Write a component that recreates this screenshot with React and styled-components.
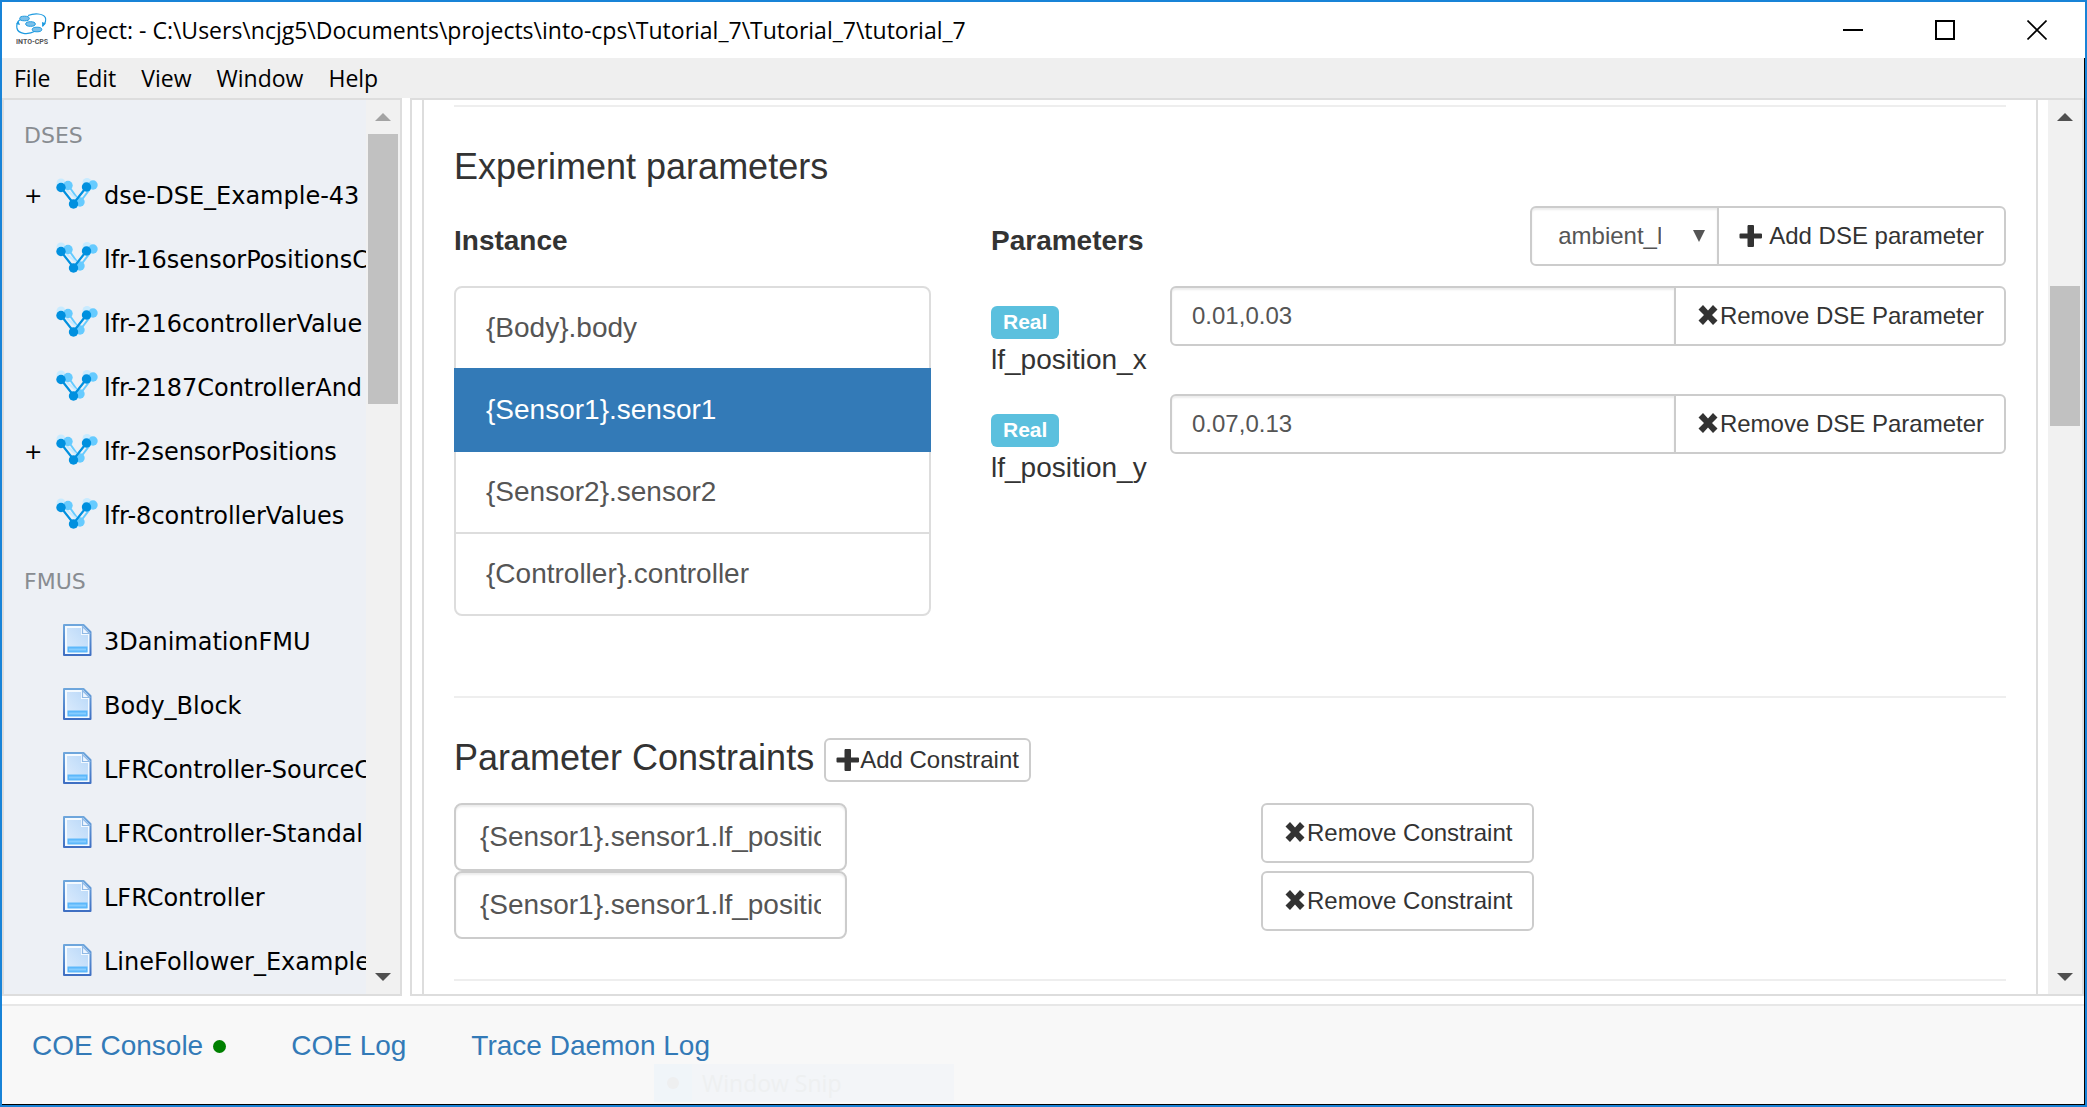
import React from "react";
import styled, { createGlobalStyle, css } from "styled-components";

const sans = `"Liberation Sans", Arial, sans-serif`;
const ui = `"Open Sans", "Segoe UI", sans-serif`;
const tree = `"DejaVu Sans", Verdana, sans-serif`;

const Global = createGlobalStyle`
  *, *::before, *::after { box-sizing: border-box; }
  html, body, #root { height: 100%; margin: 0; }
  body { overflow: hidden; background: #fff; color: #333; font-family: ${sans}; font-size: 28px; line-height: 40px; }
  button, input, select { font: inherit; color: inherit; margin: 0; }
  h1, h2, h3, h4, ul { margin: 0; padding: 0; }
`;

const Window = styled.div`
  height: 100vh;
  display: flex;
  flex-direction: column;
  border: 2px solid #1883d7;
`;

const TitleBar = styled.header`
  flex: none;
  height: 56px;
  display: flex;
  align-items: center;
  padding: 0 2px 0 14px;
  gap: 2px;
  font-family: ${ui};
  color: #000;
`;

const Title = styled.h1`
  flex: 1;
  font-size: 23px;
  font-weight: 400;
  line-height: 32px;
  white-space: pre;
`;

const WindowButtons = styled.div`
  display: flex;
`;

const WindowButton = styled.button`
  width: 92px;
  height: 56px;
  padding: 0;
  border: 0;
  background: none;
  display: grid;
  place-items: center;
`;

const Client = styled.div`
  flex: 1;
  min-height: 0;
  display: flex;
  flex-direction: column;
  border: solid #000;
  border-width: 0 1px 1px 0;
`;

const MenuBar = styled.nav`
  flex: none;
  height: 40px;
  display: flex;
  align-items: center;
  background: #efefef;
  font-family: ${ui};
  padding-left: 12px;
  gap: 25px;
`;

const MenuItem = styled.button`
  padding: 0;
  border: 0;
  background: none;
  color: #000;
  font-size: 23px;
  line-height: 32px;
`;

const Body = styled.div`
  flex: 1;
  min-height: 0;
  display: flex;
  gap: 8px;
`;

const Sidebar = styled.aside`
  flex: none;
  width: 400px;
  display: flex;
  border: 2px solid #ddd;
  background: #edf0f5;
  font-family: ${tree};
`;

const Tree = styled.div`
  flex: 1;
  min-width: 0;
  padding-top: 2px;
  overflow: hidden;
`;

const TreeHeading = styled.h2`
  height: 62px;
  padding: 6px 0 0 20px;
  display: flex;
  align-items: center;
  color: #888c91;
  font-size: 22px;
  font-weight: 400;
`;

const TreeList = styled.ul`
  list-style: none;
`;

const TreeRow = styled.li`
  height: 64px;
  display: grid;
  grid-template-columns: 32px 42px 1fr;
  align-items: center;
  padding-left: 20px;
  color: #000;
  font-size: 24px;
  white-space: nowrap;
`;

const Expander = styled.button`
  grid-column: 1;
  justify-self: start;
  padding: 0;
  border: 0;
  background: none;
  font-size: 22px;
  line-height: 32px;
`;

const IconCell = styled.span`
  grid-column: 2;
  display: grid;
  justify-items: center;
  padding-bottom: 4px;
`;

const TreeLabel = styled.span`
  grid-column: 3;
  padding-left: 6px;
`;

const Track = styled.div`
  flex: none;
  width: 34px;
  display: flex;
  flex-direction: column;
  align-items: center;
  background: #f1f1f1;
`;

const ArrowButton = styled.button`
  flex: none;
  width: 100%;
  height: 34px;
  padding: 0;
  border: 0;
  background: none;
  color: ${(p) => (p.$dim ? "#a3a3a3" : "#505050")};
  display: grid;
  place-items: center;
`;

const TrackLane = styled.div`
  flex: 1;
  width: 30px;
  display: flex;
  flex-direction: column;
`;

const Thumb = styled.div`
  height: ${(p) => p.$size}%;
  margin-top: ${(p) => p.$before}px;
  background: #c1c1c1;
`;

const Main = styled.main`
  flex: 1;
  min-width: 0;
  display: flex;
  justify-content: space-between;
  gap: 10px;
  padding-left: 10px;
  border: 2px solid #ddd;
`;

const Panel = styled.div`
  flex: 1;
  min-width: 0;
  overflow: hidden;
  border: solid #ddd;
  border-width: 0 2px;
  padding: 5px 30px 0;
`;

const Section = styled.section`
  border-top: 2px solid #eee;
  padding-top: 40px;
  padding-bottom: ${(p) => p.$bottom || 0}px;
`;

const SectionTitle = styled.h2`
  font-size: 36px;
  font-weight: 400;
  line-height: 39px;
`;

const TitleRow = styled.div`
  display: flex;
  align-items: flex-start;
  gap: 10px;
  height: 65px;
`;

const Columns = styled.div`
  display: grid;
  grid-template-columns: 477px 1fr;
  gap: 60px;
  margin-top: 20px;
`;

const ColumnHead = styled.div`
  height: 60px;
  margin-bottom: 20px;
  display: flex;
  align-items: flex-start;
  justify-content: space-between;
`;

const ColumnTitle = styled.h3`
  padding-top: 15px;
  font-size: 28px;
  font-weight: 700;
`;

const InstanceList = styled.ul`
  list-style: none;
`;

const InstanceItem = styled.li`
  &:not(:first-child) { margin-top: -2px; }
  &:first-child > button { border-radius: 8px 8px 0 0; }
  &:last-child > button { border-radius: 0 0 8px 8px; }
`;

const InstanceButton = styled.button`
  position: relative;
  display: block;
  width: 100%;
  padding: 20px 30px;
  border: 2px solid #ddd;
  background: #fff;
  color: #555;
  text-align: left;
  ${(p) =>
    p.$active &&
    css`
      z-index: 1;
      background: #337ab7;
      border-color: #337ab7;
      color: #fff;
    `}
`;

const Button = styled.button`
  flex: none;
  display: flex;
  align-items: center;
  height: ${(p) => (p.$small ? 44 : 60)}px;
  padding: 0 ${(p) => (p.$small ? 10 : 20)}px;
  gap: ${(p) => p.$gap || 0}px;
  border: 2px solid #ccc;
  border-radius: 6px;
  background: #fff;
  font-size: 24px;
  line-height: 36px;
  white-space: nowrap;
`;

const field = css`
  border: 2px solid #ccc;
  background: #fff;
  color: #555;
  box-shadow: inset 0 2px 2px rgba(0, 0, 0, 0.075);
`;

const Group = styled.div`
  display: flex;
  & > :first-child { border-radius: 6px 0 0 6px; }
  & > :last-child { border-radius: 0 6px 6px 0; }
`;

const SelectBox = styled.div`
  ${field}
  display: flex;
  align-items: center;
  width: 189px;
  margin-right: -2px;
  padding-right: 12px;
  font-size: 24px;
`;

const Select = styled.select`
  flex: 1;
  min-width: 0;
  height: 56px;
  padding: 0 32px 0 26px;
  border: 0;
  appearance: none;
  background: none;
  color: #555;
`;

const ParamRow = styled.div`
  display: grid;
  grid-template-columns: 179px 1fr;
  height: 108px;
`;

const ParamLabel = styled.label`
  display: flex;
  flex-direction: column;
  align-items: flex-start;
  gap: 1px;
  padding-top: 20px;
`;

const Badge = styled.span`
  height: 33px;
  padding: 0 12px;
  border-radius: 6px;
  background: #5bc0de;
  color: #fff;
  font-size: 21px;
  font-weight: 700;
  line-height: 32px;
`;

const ParamInput = styled.input`
  ${field}
  flex: 1;
  min-width: 0;
  height: 60px;
  margin-right: -2px;
  padding: 0 20px;
  font-size: 24px;
`;

const ConstraintRow = styled.div`
  display: grid;
  grid-template-columns: 52% auto;
  justify-content: start;
  align-items: start;
`;

const ConstraintInput = styled.input`
  ${field}
  width: 393px;
  height: 68px;
  padding: 0 24px;
  border-radius: 8px;
`;

const Gap = styled.div`
  flex: none;
  height: 8px;
`;

const Footer = styled.footer`
  position: relative;
  flex: none;
  height: 100px;
  display: flex;
  align-items: flex-start;
  gap: 65px;
  padding: 20px 30px 0;
  border-top: 2px solid #e7e7e7;
  background: #f8f8f8;
`;

const FooterLink = styled.a`
  display: flex;
  align-items: center;
  gap: 10px;
  color: #337ab7;
  text-decoration: none;
`;

const StatusDot = styled.span`
  width: 13px;
  height: 13px;
  border-radius: 50%;
  background: #008000;
`;

/* Snipping overlay fading out above the bottom bar. */
const SnipGhost = styled.div`
  position: absolute;
  left: 652px;
  bottom: 2px;
  width: 300px;
  height: 38px;
  display: flex;
  align-items: center;
  gap: 10px;
  background: #f3f5f8;
  color: #eef0f1;
  font-family: ${ui};
  font-size: 23px;
`;

const SnipIcon = styled.span`
  width: 38px;
  height: 38px;
  display: grid;
  place-items: center;
  background: #f0f5f9;
  &::before { content: ""; width: 12px; height: 12px; border-radius: 50%; background: #eeeff0; }
`;

const Logo = () => (
  <svg width="34" height="34" viewBox="0 0 34 34" aria-hidden="true">
    <g fill="none" stroke="#1f9be0" strokeWidth="1.2">
      <path d="M12 2.500C18 .2 27 .2 29.300 4.500c1.200 3-.3 6-2.600 8.500" />
      <path d="M4.500 6.500C1.500 8 .4 12 1 15.500c1.200 5 10 7 18.500 2.500" />
    </g>
    <path d="M26 9l4 1.500-3.800 3.500zM.2 11l2.300-3 1.500 4z" fill="#1f9be0" />
    <g fill="#7cc0ea" stroke="#1f9be0" strokeWidth="1">
      <ellipse cx="8.500" cy="5.500" rx="4.800" ry="2.300" />
      <ellipse cx="14.500" cy="11" rx="4.800" ry="2.300" />
      <ellipse cx="21" cy="16.500" rx="4.800" ry="2.300" />
    </g>
    <text x="0" y="31" fontFamily="Liberation Sans Narrow, Roboto, sans-serif" fontSize="7" fontWeight="700" fill="#555">INTO-CPS</text>
  </svg>
);

const DseIcon = () => (
  <svg width="42" height="32" viewBox="0 0 42 32" aria-hidden="true">
    <g fill="#c8ebff"><circle cx="5" cy="5" r="4.500" /><circle cx="31" cy="4.500" r="4.500" /></g>
    <path d="M12 7l12 17L37 7" fill="none" stroke="#66cbff" strokeWidth="2" />
    <path d="M7 9l14 12L30 9" fill="none" stroke="#c8ebff" strokeWidth="2" />
    <g fill="#66cbff"><circle cx="12" cy="7.500" r="4.700" /><circle cx="37" cy="7" r="4.700" /><circle cx="24" cy="24" r="4.700" /></g>
    <path d="M5 9.500l12.500 16L30.500 9" fill="none" stroke="#0090df" strokeWidth="2.200" />
    <g fill="#0090df"><circle cx="5" cy="9.500" r="4.700" /><circle cx="30.500" cy="9" r="4.700" /><circle cx="17.500" cy="26" r="4.700" /></g>
  </svg>
);

const FileIcon = () => (
  <svg width="30" height="32" viewBox="0 0 30 32" aria-hidden="true">
    <defs>
      <linearGradient id="edge" x1="0" y1="0" x2="0" y2="1"><stop offset="0" stopColor="#6ea6dc" /><stop offset="1" stopColor="#3f6fc2" /></linearGradient>
      <linearGradient id="sheet" x1="1" y1="0" x2="0" y2="1"><stop offset="0" stopColor="#b9d8f8" /><stop offset="1" stopColor="#dcecfd" /></linearGradient>
    </defs>
    <path d="M2 1h19.500l7 7v23H2z" fill="#f4faff" stroke="url(#edge)" strokeWidth="2" strokeLinejoin="round" />
    <path d="M5 4h14v7h7v17H5z" fill="url(#sheet)" />
    <path d="M20.500 2.500v7h7z" fill="#eef6ff" stroke="#8fb9e6" strokeWidth="1.200" />
    <path d="M5.500 22.500h20v6h-20z" fill="#5cb8fb" />
    <path d="M7 25.500h17" stroke="#86cdff" strokeWidth="2" />
  </svg>
);

const PlusIcon = () => (
  <svg width="24" height="24" viewBox="0 0 24 24" aria-hidden="true">
    <path d="M9 1h5a1 1 0 0 1 1 1v7.500h7a1 1 0 0 1 1 1v3a1 1 0 0 1-1 1h-7V22a1 1 0 0 1-1 1H9.500a1 1 0 0 1-1-1v-7.500h-7a1 1 0 0 1-1-1v-3a1 1 0 0 1 1-1h7V2z" fill="#333" />
  </svg>
);

const CrossIcon = () => (
  <svg width="24" height="24" viewBox="0 0 24 24" aria-hidden="true">
    <path d="M7 1l5 5.500L17 1l4.500 4.500-5.500 5.500 5.500 5.500L17 21l-5-5.500L7 21l-4.500-4.500L8 11 2.500 5.500z" fill="#333" />
  </svg>
);

const Arrow = ({ down }) => (
  <svg width="16" height="8" viewBox="0 0 16 8" aria-hidden="true">
    <path d={down ? "M0 0h16L8 8z" : "M0 8h16L8 0z"} fill="currentColor" />
  </svg>
);

const Scrollbar = ({ before, size, dimUp }) => (
  <Track>
    <ArrowButton $dim={dimUp} aria-label="Scroll up"><Arrow /></ArrowButton>
    <TrackLane><Thumb $before={before} $size={size} /></TrackLane>
    <ArrowButton aria-label="Scroll down"><Arrow down /></ArrowButton>
  </Track>
);

const dses = [
  { name: "dse-DSE_Example-43", open: true },
  { name: "lfr-16sensorPositionsC" },
  { name: "lfr-216controllerValue" },
  { name: "lfr-2187ControllerAnd" },
  { name: "lfr-2sensorPositions", open: true },
  { name: "lfr-8controllerValues" },
];
const fmus = ["3DanimationFMU", "Body_Block", "LFRController-SourceC", "LFRController-Standal", "LFRController", "LineFollower_Example"];
const instances = ["{Body}.body", "{Sensor1}.sensor1", "{Sensor2}.sensor2", "{Controller}.controller"];
const parameters = [
  { name: "lf_position_x", value: "0.01,0.03" },
  { name: "lf_position_y", value: "0.07,0.13" },
];
const constraints = ["{Sensor1}.sensor1.lf_position_x", "{Sensor1}.sensor1.lf_position_y"];

export default function App() {
  return (
    <>
      <Global />
      <Window>
        <TitleBar>
          <Logo />
          <Title>{"Project: - C:\\Users\\ncjg5\\Documents\\projects\\into-cps\\Tutorial_7\\Tutorial_7\\tutorial_7"}</Title>
          <WindowButtons>
            <WindowButton aria-label="Minimize">
              <svg width="20" height="20"><path d="M0 10h20" stroke="#000" strokeWidth="2" /></svg>
            </WindowButton>
            <WindowButton aria-label="Maximize">
              <svg width="20" height="20"><path d="M1 1h18v18H1z" fill="none" stroke="#000" strokeWidth="2" /></svg>
            </WindowButton>
            <WindowButton aria-label="Close">
              <svg width="20" height="20"><path d="M.5.5l19 19M19.500.5l-19 19" stroke="#000" strokeWidth="1.600" /></svg>
            </WindowButton>
          </WindowButtons>
        </TitleBar>
        <Client>
          <MenuBar>
            {["File", "Edit", "View", "Window", "Help"].map((m) => <MenuItem key={m}>{m}</MenuItem>)}
          </MenuBar>
          <Body>
            <Sidebar>
              <Tree>
                <TreeHeading>DSES</TreeHeading>
                <TreeList>
                  {dses.map((d) => (
                    <TreeRow key={d.name}>
                      {d.open && <Expander aria-label={"Expand " + d.name}>+</Expander>}
                      <IconCell><DseIcon /></IconCell>
                      <TreeLabel>{d.name}</TreeLabel>
                    </TreeRow>
                  ))}
                </TreeList>
                <TreeHeading>FMUS</TreeHeading>
                <TreeList>
                  {fmus.map((f) => (
                    <TreeRow key={f}>
                      <IconCell><FileIcon /></IconCell>
                      <TreeLabel>{f}</TreeLabel>
                    </TreeRow>
                  ))}
                </TreeList>
              </Tree>
              <Scrollbar before={0} size={32.7} dimUp />
            </Sidebar>
            <Main>
              <Panel>
                <Section $bottom={80}>
                  <SectionTitle>Experiment parameters</SectionTitle>
                  <Columns>
                    <div>
                      <ColumnHead><ColumnTitle>Instance</ColumnTitle></ColumnHead>
                      <InstanceList>
                        {instances.map((name, i) => (
                          <InstanceItem key={name}>
                            <InstanceButton $active={i === 1}>{name}</InstanceButton>
                          </InstanceItem>
                        ))}
                      </InstanceList>
                    </div>
                    <div>
                      <ColumnHead>
                        <ColumnTitle>Parameters</ColumnTitle>
                        <Group>
                          <SelectBox>
                            <Select aria-label="DSE parameter" defaultValue="a"><option value="a">ambient_light</option></Select>
                            <svg width="12" height="12" aria-hidden="true"><path d="M0 0h12L6 12z" fill="#555" /></svg>
                          </SelectBox>
                          <Button $gap={6}><PlusIcon />Add DSE parameter</Button>
                        </Group>
                      </ColumnHead>
                      {parameters.map((p) => (
                        <ParamRow key={p.name}>
                          <ParamLabel htmlFor={p.name}><Badge>Real</Badge>{p.name}</ParamLabel>
                          <Group>
                            <ParamInput id={p.name} defaultValue={p.value} />
                            <Button><CrossIcon />Remove DSE Parameter</Button>
                          </Group>
                        </ParamRow>
                      ))}
                    </div>
                  </Columns>
                </Section>
                <Section $bottom={40}>
                  <TitleRow>
                    <SectionTitle>Parameter Constraints</SectionTitle>
                    <Button $small><PlusIcon />Add Constraint</Button>
                  </TitleRow>
                  {constraints.map((c, i) => (
                    <ConstraintRow key={c}>
                      <ConstraintInput aria-label={"Constraint " + (i + 1)} defaultValue={c} />
                      <Button><CrossIcon />Remove Constraint</Button>
                    </ConstraintRow>
                  ))}
                </Section>
                <Section />
              </Panel>
              <Scrollbar before={152} size={17} />
            </Main>
          </Body>
          <Gap />
          <Footer>
            <FooterLink href="#console">COE Console<StatusDot /></FooterLink>
            <FooterLink href="#log">COE Log</FooterLink>
            <FooterLink href="#trace">Trace Daemon Log</FooterLink>
            <SnipGhost aria-hidden="true"><SnipIcon />Window Snip</SnipGhost>
          </Footer>
        </Client>
      </Window>
    </>
  );
}
